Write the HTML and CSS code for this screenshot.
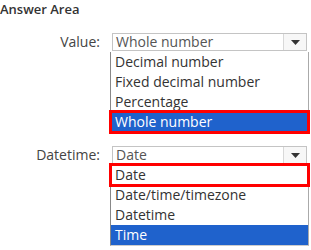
FILE: index.html
```html
<!DOCTYPE html>
<html lang="en">
<head>
  <meta charset="UTF-8">
  <title>Answer Area</title>
  <link rel="stylesheet" href="styles.css">
</head>
<body>
<h1 class="title">Answer Area</h1>

<div class="field value-field">
  <div class="label">Value:</div>
  <div class="dropdown">
    <div class="select">
      <span class="current">Whole number</span>
      <span class="arrow"><svg width="9" height="5" viewBox="0 0 9 5"><path d="M0 0 L9 0 L4.5 5 Z" fill="#333"/></svg></span>
    </div>
    <ul class="options">
      <li>Decimal number</li>
      <li>Fixed decimal number</li>
      <li>Percentage</li>
      <li class="selected answer">Whole number</li>
    </ul>
  </div>
</div>

<div class="field datetime-field">
  <div class="label">Datetime:</div>
  <div class="dropdown">
    <div class="select">
      <span class="current">Date</span>
      <span class="arrow"><svg width="9" height="5" viewBox="0 0 9 5"><path d="M0 0 L9 0 L4.5 5 Z" fill="#333"/></svg></span>
    </div>
    <ul class="options">
      <li class="answer">Date</li>
      <li>Date/time/timezone</li>
      <li>Datetime</li>
      <li class="selected">Time</li>
    </ul>
  </div>
</div>

</body>
</html>
```

FILE: styles.css
```css
body {
  margin: 0;
  font-family: "Open Sans", sans-serif;
  color: #3a3a3a;
  background: #fff;
}
.title {
  margin: 0;
  padding-top: 1px;
  font-size: 13px;
  font-weight: 600;
  line-height: 16px;
  height: 32px;
  color: #333;
}
.field {
  display: flex;
  align-items: flex-start;
}
.datetime-field {
  margin-top: 13px;
}
.label {
  width: 110px;
  text-align: right;
  padding-right: 10px;
  font-size: 14px;
  line-height: 17px;
  color: #444;
  box-sizing: border-box;
}
.dropdown {
  width: 200px;
}
.select {
  display: flex;
  height: 18px;
  margin-left: 2px;
  margin-right: 3px;
  border: 1px solid #c4c4c4;
  box-sizing: border-box;
  background: #fff;
}
.current {
  flex: 1;
  padding-left: 3px;
  font-size: 14px;
  line-height: 16px;
  color: #555;
}
.arrow {
  width: 22px;
  border-left: 1px solid #d8d8d8;
  display: flex;
  align-items: center;
  justify-content: center;
  background: #f7f7f7;
}
.options {
  list-style: none;
  margin: 1px 1px 0 0;
  padding: 0;
  border-left: 1px solid #888;
  border-right: 1px solid #aaa;
  border-bottom: 1px solid #ccc;
}
.options li {
  height: 20px;
  line-height: 20px;
  padding-left: 4px;
  font-size: 14px;
  color: #333;
}
.options li.selected {
  background: #1f62cc;
  color: #fff;
}
.options li.answer {
  outline: 3px solid #f00;
  outline-offset: -1px;
  position: relative;
}
```
